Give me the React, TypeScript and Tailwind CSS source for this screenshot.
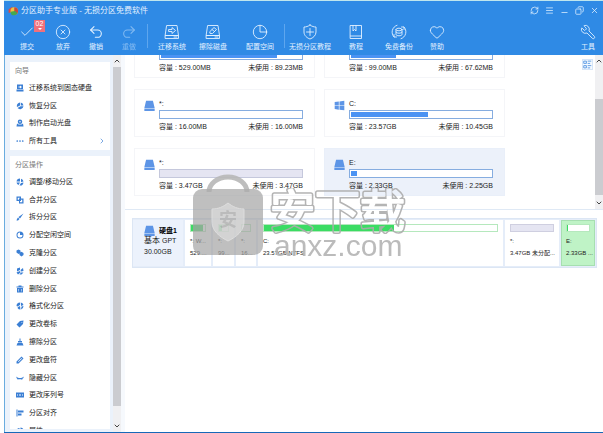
import type { ReactNode } from "react";
import {
  Check, CircleX, Undo2, Redo2, Heart, Wrench, RefreshCw, Menu, Minus, Copy, X,
  ChevronRight, ChevronUp, ChevronDown,
} from "lucide-react";

type G = { children: ReactNode; className?: string };

function Line({ children, className = "size-4" }: G) {
  return (
    <svg viewBox="0 0 16 16" className={className} fill="none" stroke="currentColor" strokeWidth="0.9" strokeLinejoin="round" strokeLinecap="round">
      {children}
    </svg>
  );
}

function Solid({ children }: G) {
  return (
    <svg viewBox="0 0 16 16" className="size-2 shrink-0 text-[#3b7fd4]" fill="currentColor" stroke="none">
      {children}
    </svg>
  );
}

const tools: { label: string; box: string; icon: ReactNode; badge?: string; sep?: boolean; dim?: boolean }[] = [
  { label: "提交", box: "w-[36px]", icon: <Check className="size-4" strokeWidth={1.3} />, badge: "02" },
  { label: "放弃", box: "w-[36px]", icon: <CircleX className="size-4" strokeWidth={1.3} /> },
  { label: "撤销", box: "w-[30px]", icon: <Undo2 className="size-4" strokeWidth={1.6} /> },
  { label: "重做", box: "w-[36px]", icon: <Redo2 className="size-4" strokeWidth={1.6} />, dim: true, sep: true },
  {
    label: "迁移系统", box: "w-[48px]",
    icon: <Line><path d="M3 1.5h10l1.5 10h-13zM1.5 11.5h13v3h-13zM10 13h3" /><path d="M5 5.5h3v-2l3.5 3-3.5 3v-2h-3z" /></Line>,
  },
  {
    label: "擦除磁盘", box: "w-[34px]",
    icon: <Line><path d="M3 1.5h10l1.5 10h-13zM1.5 11.5h13v3h-13zM10 13h3" /><path d="M5 7.5l4-4 2.5 2-4 4h-2zM7 5.5l2.5 2" /></Line>,
  },
  { label: "配置空间", box: "ml-3 mr-1.5 w-[36px]", icon: <Line><circle cx="8" cy="8" r="6.700" /><path d="M8 1.300V8h6.700" /></Line>, sep: true },
  { label: "无损分区教程", box: "w-[50px]", icon: <Line><path d="M8 1c2 1.5 4 2 6 2v5c0 3.5-3 6-6 7-3-1-6-3.500-6-7V3c2 0 4-.5 6-2zM8 4.500v7M4.500 8h7" /></Line> },
  { label: "教程", box: "w-[42px]", icon: <Line><path d="M2.500 1.500h11v13h-11zM2.500 12h11M5 1.500V7l1.500-1.500L8 7V1.500" /></Line> },
  {
    label: "免费备份", box: "w-[44px]",
    icon: <Line><ellipse cx="8" cy="5.500" rx="3" ry="1.300" /><path d="M5 5.500v5c0 1.700 6 1.700 6 0v-5M5 8c0 1.700 6 1.700 6 0M3 13A7 7 0 0 1 6 1.300M13 3a7 7 0 0 1-3 11.700M13 5.500V3h-2.500M3 10.500V13h2.500" /></Line>,
  },
  { label: "赞助", box: "w-[32px]", icon: <Heart className="size-4" strokeWidth={1.3} /> },
];

const disk = <path d="M3 1h10l2.500 10.500H.5zM.5 12.500h15V16H.5z" />;
const pie = <path d="M7 2a6.500 6.500 0 1 0 7 7H7zM9 1a6 6 0 0 1 6 6H9z" />;

const wizard: [string, ReactNode][] = [
  ["迁移系统到固态硬盘", <path fillRule="evenodd" d="M2 1h12v9H2zM1 11h14v4H1zM5 5v2h3v2l4-3-4-3v2z" />],
  ["恢复分区", <path d="M8 1v6L2 10A7 7 0 0 1 8 1zM9.500 1A7 7 0 0 1 15 7H9.500zM15 8.500A7 7 0 0 1 3 12l6-3.500z" />],
  ["制作启动光盘", <><path fillRule="evenodd" d="M8 1a4.500 4.500 0 1 1 0 9 4.500 4.500 0 0 1 0-9zm0 3a1.500 1.500 0 1 0 0 3 1.500 1.500 0 0 0 0-3z" /><path d="M2 9l3 2h6l3-2 1 6H1z" /></>],
  ["所有工具", <><circle cx="2.500" cy="8" r="1.700" /><circle cx="8" cy="8" r="1.700" /><circle cx="13.500" cy="8" r="1.700" /></>],
];

const actions: [string, ReactNode][] = [
  ["调整/移动分区", <path d="M8 1v6H1a7 7 0 0 1 7-6zM10 1.500A7 7 0 0 1 15 7l-5 1zM1 9h7l-3 5a7 7 0 0 1-4-5zM10 10l5-1a7 7 0 0 1-8 6z" />],
  ["合并分区", <path fillRule="evenodd" d="M1 1h9v4h5v10H6v-5H1zM3.500 3.500v4H6V5h1.500V3.500zM8 7.500v5h4.500v-5H10V10H8z" />],
  ["拆分分区", <path d="M15 1L5 8l3 3zM4 9l3 3-3 3H1l1-3z" />],
  ["分配空闲空间", <path fillRule="evenodd" d="M8 1a7 7 0 1 1 0 14A7 7 0 0 1 8 1zM8 3a5 5 0 1 0 5 5H8z" />],
  ["克隆分区", <path d="M1 3l4-2 4 2v4l-4 3-4-3zM7 8l4-2.500L15 8v4l-4 3-4-3z" />],
  ["创建分区", <path d="M2 3l6-2v5L2 9zM9 6l5-4 1 6-5 1zM1 11l7-3 1 3-5 4zM10 11h5l-4 4H7z" />],
  ["删除分区", <path fillRule="evenodd" d="M5 1h6v2h4v2H1V3h4zM2 6h12v9H2zM5 8v5h1V8zM10 8v5h1V8z" />],
  ["格式化分区", <path d="M8 1v5L3 9 1 8a7 7 0 0 1 7-7zM9.500 1A7 7 0 0 1 15 6l-5 2zM11 9l4-1a7 7 0 0 1-5 7zM4 10l4-2 1 7a7 7 0 0 1-6-3z" />],
  ["更改卷标", <path fillRule="evenodd" d="M8 2l7-1-1 7-7 7-6-6zM11 4v1.500h1.500V4z" />],
  ["擦除分区", <path d="M7 1h2v5h3v3H4V6h3zM3 10h10l2 5H1z" />],
  ["更改盘符", <path fillRule="evenodd" d="M11 1l4 4L5 15H1v-4zM11 4l-7 7 1 1 7-7z" />],
  ["隐藏分区", <path d="M1 5c3 4 11 4 14 0v3l-2 1 1 2-2-1-1 1-1 1-1-2H7l-1 2-1-2-2 1-1-2-1-1z" />],
  ["更改序列号", <path fillRule="evenodd" d="M0 3h16v10H0zM3 6v4h1V6zM6 6v4h1V6zM9 6v4h1V6zM12 6v4h1V6z" />],
  ["分区对齐", <path d="M1 1h2v14H1zM4 3h11v4H4zM4 9h7v4H4z" />],
  ["属性", pie],
];

function Row({ label, icon, more }: { label: string; icon: ReactNode; more?: boolean }) {
  return (
    <button type="button" className="flex w-full min-h-0 items-center gap-[5px] pl-1.5 pr-1 text-left">
      <Solid>{icon}</Solid>
      <span className="whitespace-nowrap">{label}</span>
      {more && <ChevronRight className="ml-auto size-2 text-[#3b7fd4]" />}
    </button>
  );
}

type Volume = { name?: string; size: string; free: string; used: number; windows?: boolean; unallocated?: boolean; active?: boolean };

const volumes: Volume[] = [
  { size: "529.00MB", free: "89.23MB", used: 83 },
  { size: "99.00MB", free: "67.62MB", used: 32 },
  { name: "*:", size: "16.00MB", free: "16.00MB", used: 0 },
  { name: "C:", size: "23.57GB", free: "10.45GB", used: 55, windows: true },
  { name: "*:", size: "3.47GB", free: "3.47GB", used: 0, unallocated: true },
  { name: "E:", size: "2.33GB", free: "2.25GB", used: 4, active: true },
];

function DiskIcon() {
  return <svg viewBox="0 0 16 16" className="size-[11px] shrink-0" fill="#5d95e6">{disk}</svg>;
}

function Card({ v }: { v: Volume }) {
  return (
    <article className={`flex h-12 items-start gap-[4px] border pl-[9px] pr-[11px] pt-[10px] ${v.active ? "border-[#e9eff9] bg-[#ecf1fa]" : "border-[#f4f5f8] bg-white"}`}>
      {v.windows ? (
        <svg viewBox="0 0 16 16" className="size-[11px] shrink-0" fill="#5d95e6"><path d="M1 3l6-1v5.500H1zM8 2l7-1v6.500H8zM1 8.500h6V14l-6-1zM8 8.500h7V15l-7-1z" /></svg>
      ) : <DiskIcon />}
      <div className="min-w-0 flex-1">
        <h3 className="h-[10px] leading-[8px]">{v.name}</h3>
        <div className={`h-[9px] border p-px ${v.unallocated ? "border-[#c5c8dc] bg-[#e5e5f2]" : "border-[#86ade0] bg-white"}`}>
          <div className="h-full bg-[#4b93f3]" style={{ width: `${v.used}%` }} />
        </div>
        <p className="mt-1 flex justify-between whitespace-nowrap leading-[8px]">
          <span>容量 : {v.size}</span>
          <span>未使用 : {v.free}</span>
        </p>
      </div>
    </article>
  );
}

const parts = [
  { name: "*: W...", info: "529....", box: "w-[26px]", used: 83 },
  { name: "*:", info: "99...", box: "w-[21px]", used: 32 },
  { name: "*:", info: "16...", box: "w-[20px]", used: 0 },
  { name: "C:", info: "23.57GB NTFS", box: "flex-1", used: 56 },
  { name: "*:", info: "3.47GB 未分配...", box: "w-[54px]", used: 0, unallocated: true },
  { name: "E:", info: "2.33GB ...", box: "w-[34px]", used: 6, active: true },
];

function Scrollbar({ thumb }: { thumb: string }) {
  return (
    <div className="flex w-2 shrink-0 flex-col items-center bg-[#f0f0f2] text-[#444]">
      <ChevronUp className="my-0.5 size-2 shrink-0" strokeWidth={3} />
      <div className="flex min-h-0 w-full flex-1 flex-col">
        <div className={`w-full bg-[#cbccd0] ${thumb}`} />
      </div>
      <ChevronDown className="my-0.5 size-2 shrink-0" strokeWidth={3} />
    </div>
  );
}

export default function App() {
  return (
    <div className="relative h-screen overflow-hidden bg-white pl-1 font-['Liberation_Sans_Narrow','Liberation_Sans','Noto_Sans_CJK_SC',sans-serif] text-[7px] leading-[10px] text-[#222]">
      <div className="flex h-full flex-col border-b border-[#1769b8] border-t border-t-[#bfe6ee]">
        <header className="shrink-0 bg-[#2f8ae5] text-[#e3f1ff]">
          <div className="flex h-[19px] items-center pl-1 pr-1">
            <svg viewBox="0 0 16 16" className="mr-[3px] size-[10px]">
              <path d="M1 5l6-4v8l-6 2z" fill="#e5483d" />
              <circle cx="10" cy="8" r="6" fill="#e8c545" />
              <path d="M10 2a6 6 0 0 1 0 12z" fill="#c9483d" />
              <path d="M4 9l7-1 4 3a6 6 0 0 1-10 2z" fill="#45a94d" />
            </svg>
            <h1 className="text-[8px] leading-[10px]">分区助手专业版 - 无损分区免费软件</h1>
            <div className="ml-auto flex items-center gap-[6px]">
              <button type="button" aria-label="刷新"><RefreshCw className="size-[9px]" /></button>
              <button type="button" aria-label="菜单"><Menu className="size-[9px]" /></button>
              <button type="button" aria-label="最小化" className="pt-1"><Minus className="size-[9px]" /></button>
              <button type="button" aria-label="还原"><Copy className="size-[9px] -scale-x-100" /></button>
              <button type="button" aria-label="关闭"><X className="size-[9px]" /></button>
            </div>
          </div>
          <div className="flex h-[35px] pl-[5px]">
            {tools.map((t) => (
              <div key={t.label} className="flex">
                <button type="button" className={`relative flex flex-col items-center gap-[2px] pt-1 ${t.box} ${t.dim ? "opacity-45" : ""}`}>
                  {t.icon}
                  <span className="whitespace-nowrap">{t.label}</span>
                  {t.badge && (
                    <span className="absolute right-0 top-0 flex h-3 w-[11px] flex-col items-center bg-[#f0707c] leading-[8px] text-white">
                      {t.badge}
                      <svg viewBox="0 0 4 2" className="h-0.5 w-1" fill="white"><path d="M0 0h4L2 2z" /></svg>
                    </span>
                  )}
                </button>
                {t.sep && <span className="mt-1 h-6 w-px bg-[#5ea6ee]" />}
              </div>
            ))}
            <button type="button" className="ml-auto flex w-[30px] flex-col items-center gap-[2px] pt-1">
              <Wrench className="size-4 -scale-x-100" strokeWidth={1.3} />
              <span>工具</span>
            </button>
          </div>
        </header>

        <div className="flex min-h-0 flex-1">
          <aside className="flex w-[117px] shrink-0 overflow-hidden border-l border-[#69acdf] bg-[#ebf2fb]">
            <div className="flex min-w-0 flex-1 flex-col gap-1.5 overflow-hidden pb-[3px] pl-[5px] pr-[3px] pt-[7px]">
              <nav aria-label="向导" className="shrink-0 bg-white">
                <h2 className="flex h-[17px] items-center pl-[5px] text-[#777]">向导</h2>
                <div className="grid h-[71px] auto-rows-fr">
                  {wizard.map(([l, i], n) => <Row key={l} label={l} icon={i} more={n === 3} />)}
                </div>
              </nav>
              <nav aria-label="分区操作" className="min-h-0 flex-1 overflow-hidden bg-white">
                <h2 className="flex h-[17px] items-center pl-[5px] text-[#777]">分区操作</h2>
                <div className="grid h-[267px] auto-rows-fr">
                  {actions.map(([l, i]) => <Row key={l} label={l} icon={i} />)}
                </div>
              </nav>
            </div>
            <Scrollbar thumb="h-[96%]" />
          </aside>

          <main className="flex min-w-0 flex-1 flex-col border-l-4 border-[#f6f9fd]">
            <section className="flex h-[154px] shrink-0 overflow-hidden">
              <div className="flex min-w-0 flex-1 flex-col justify-end pb-[13px] pl-[9px] pr-[79px]">
                <div className="grid shrink-0 grid-cols-2 gap-x-[9px] gap-y-[11px]">
                  {volumes.map((v, n) => <Card key={n} v={v} />)}
                </div>
              </div>
              <button type="button" aria-label="切换视图" className="-ml-[2px] mr-[2px] mt-1 flex size-[11px] shrink-0 items-center justify-center border border-[#d5e5f8] bg-[#f5faff] text-[#4b8fe0]">
                <Line className="size-[9px]"><path strokeWidth="1.500" d="M2 2h4v4H2zM2 10h4v4H2zM9 2h5M9 6h3M9 10h5M9 14h3" /></Line>
              </button>
              <Scrollbar thumb="mt-8 h-24" />
            </section>
            <section className="border-t border-[#dfe9f5] pl-[7px] pr-[6px] pt-2">
              <div className="flex h-[50px] gap-[2px] border border-[#dce6f4] bg-[#e5edf9] py-px pr-px">
                <div className="w-[50px] shrink-0 bg-[#ecf2fc] pl-[11px] pt-[5px]">
                  <div className="flex items-end gap-[4px] font-bold text-black"><DiskIcon />硬盘1</div>
                  <div><span className="text-[8px]">基本</span> GPT</div>
                  <div className="pt-px">30.00GB</div>
                </div>
                {parts.map((p, n) => (
                  <button key={n} type="button" className={`flex min-w-0 flex-col items-stretch overflow-hidden border px-[4px] pt-[3px] text-left text-[6px] ${p.box} ${p.active ? "border-[#a6dfb0] bg-[#bff3c6]" : "border-white bg-white"}`}>
                    <span className={`block h-[8px] border ${p.unallocated ? "border-[#cfcfe0] bg-[#e5e5f2]" : "border-[#b5e8bd] bg-white"}`}>
                      <span className="block h-full bg-[#3bdc63]" style={{ width: `${p.used}%` }} />
                    </span>
                    <span className="mt-[4px] whitespace-nowrap">{p.name}</span>
                    <span className="mt-[2px] whitespace-nowrap">{p.info}</span>
                  </button>
                ))}
              </div>
            </section>
          </main>
        </div>
      </div>

      <div aria-hidden="true" className="pointer-events-none absolute left-[193px] top-[174px] flex gap-[7px] font-['Liberation_Sans','Noto_Sans_CJK_SC',sans-serif] text-[#b4b4b4] opacity-90">
        <div className="relative">
          <svg viewBox="0 0 70 82" className="h-[82px] w-[70px]">
            <path d="M16 18a19 15 0 0 1 38 0" fill="none" stroke="#b8b8b8" strokeWidth="5" />
            <rect y="15" width="70" height="66" rx="9" fill="#a4a4a4" opacity="0.78" />
            <path d="M35 29c5 4 10 6 16 6v13c0 9-8 15-16 19-8-4-16-10-16-19V35c6 0 11-2 16-6z" fill="#d0d0d0" stroke="#dedede" opacity="0.9" />
          </svg>
          <span className="absolute left-[26px] top-[36px] text-[18px] font-bold leading-[20px] text-[#b4b4b4]">安</span>
        </div>
        <div className="pt-[14px]">
          <svg viewBox="0 0 140 46" className="h-[46px] w-[140px]" fontSize="45" strokeLinejoin="round">
            <mask id="hollow" maskUnits="userSpaceOnUse" x="0" y="0" width="140" height="46">
              <rect width="140" height="46" fill="white" />
              <text x="0" y="40" fill="black" stroke="black" strokeWidth="2">安下载</text>
            </mask>
            <text x="0" y="40" fill="#acacac" stroke="#acacac" strokeWidth="5" mask="url(#hollow)">安下载</text>
          </svg>
          <div className="pl-1 text-[30px] leading-[24px]">anxz.com</div>
        </div>
      </div>
    </div>
  );
}
